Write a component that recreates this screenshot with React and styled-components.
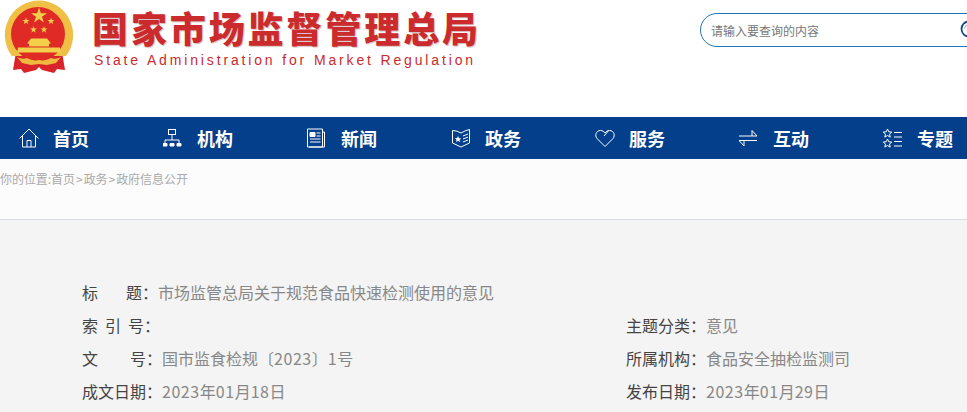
import React from 'react'
import styled, { createGlobalStyle } from 'styled-components'

const cjk = '"Noto Sans CJK SC", "Liberation Sans", sans-serif'

const Global = createGlobalStyle`
  html, body { margin: 0; padding: 0; background: #f4f4f4; }
  body { font-family: ${cjk}; overflow: hidden; }
`

const Page = styled.div`
  width: 967px;
  height: 412px;
  overflow: hidden;
`

const Header = styled.header`
  height: 117px;
  background: #fff;
  display: flex;
  align-items: flex-start;
`

const Brand = styled.div`
  display: flex;
  width: 700px;
  flex: none;
`

const Emblem = styled.svg`
  width: 78px;
  height: 76px;
  flex: none;
  margin-right: 15px;
`

const BrandText = styled.div`
  display: flex;
  flex-direction: column;
`

const BrandName = styled.div`
  margin-top: 6px;
  margin-left: -1px;
  height: 42px;
  font-size: 36px;
  line-height: 42px;
  font-weight: 900;
  letter-spacing: 2.9px;
  color: #cc2b2e;
  white-space: nowrap;
  text-shadow: 1px 1px 1px rgba(120, 60, 60, 0.35);
`

const BrandEn = styled.div`
  margin-top: 3px;
  margin-left: 1px;
  font-family: "Liberation Sans", sans-serif;
  font-size: 14px;
  line-height: 18px;
  letter-spacing: 2.85px;
  color: #cc2b2e;
  white-space: nowrap;
`

const Search = styled.div`
  margin-top: 13px;
  width: 300px;
  height: 34px;
  box-sizing: border-box;
  flex: none;
  border: 1px solid #1f74bd;
  border-radius: 17px;
  display: flex;
  align-items: center;
  padding-left: 10px;
  background: #fff;
`

const SearchHint = styled.span`
  width: 249px;
  flex: none;
  font-size: 12px;
  color: #777;
`

const SearchIcon = styled.svg`
  width: 20px;
  height: 20px;
  flex: none;
`

const Nav = styled.nav`
  height: 42px;
  background: #033f8b;
  display: flex;
  align-items: center;
  padding-left: 19px;
`

const NavItem = styled.a`
  width: 144px;
  flex: none;
  display: flex;
  align-items: center;
  gap: 14px;
  color: #fff;
`

const NavIcon = styled.svg`
  width: 20px;
  height: 20px;
  flex: none;
  fill: none;
  stroke: #fff;
  stroke-width: 1;
`

const NavLabel = styled.span`
  font-size: 18px;
  line-height: 42px;
  font-weight: 700;
  white-space: nowrap;
`

const Crumb = styled.div`
  height: 61px;
  box-sizing: border-box;
  background: #fcfcfc;
  border-bottom: 1px solid #d9dee5;
  font-size: 12px;
  line-height: 40px;
  color: #aaa;
  white-space: nowrap;
  letter-spacing: -0.05px;
`

const CrumbSep = styled.span`
  margin: 0 1px;
`

const Meta = styled.section`
  padding: 56px 0 0 82px;
  display: grid;
  grid-template-columns: 544px 1fr;
  grid-auto-rows: 33px;
  font-size: 16px;
  line-height: 33px;
  background: #f4f4f4;
`

const MetaCell = styled.div`
  display: flex;
  grid-column: ${p => (p.$wide ? '1 / -1' : 'auto')};
  white-space: nowrap;
`

const Label = styled.span`
  width: ${p => p.$width}px;
  flex: none;
  display: flex;
  justify-content: space-between;
  color: #444;
`

const Colon = styled.span`
  width: 16px;
  flex: none;
  color: #444;
`

const Value = styled.span`
  color: #888;
`

const Num = styled.span`
  letter-spacing: 0.55px;
`

const navItems = [
  { label: '首页', icon: <><path d="M.5 10.500 10 1l9.500 9.500" /><path d="M3.500 8V19h13V8" /><path d="M8 19v-6.500h4V19" /></> },
  { label: '机构', icon: <><rect x="5.500" y="1.500" width="7" height="5" /><path d="M9 6.500V12M2 15v-3h14v3" /><path d="M0 15.500h4V18H0zM7 15.500h4V18H7zM14 15.500h4V18h-4z" fill="#fff" /></> },
  { label: '新闻', icon: <><path d="M.5 1h15v18H.5z" /><path d="M16 4h1.500v15H2" /><path d="M3 4.500h5v4H3z" fill="#fff" /><path d="M9.500 5h4M9.500 8h4M3 11h10.500M3 14h10.500" /></> },
  { label: '政务', icon: <><path d="M1.500 2.500 Q6 2.500 10 5 Q14 2.500 18.500 1.500 V15 L10 19 1.500 15z" /><path d="M12 8l5-2M12 11l5-2M12 14l5-2" /><path d="M7 8l1 2.200 2.300.2-1.800 1.500.6 2.300L7 12.800 5 14l.6-2.300-1.800-1.500 2.300-.2z" fill="#fff" stroke="none" /></> },
  { label: '服务', icon: <path d="M10 18.500 2 10.500C-.5 7.500 1 2.500 5.500 2.500 7.500 2.500 9 3.500 10 5 11 3.500 12.500 2.500 14.500 2.500 19 2.500 20.500 7.500 18 10.500zM13.500 2.800 9 8" /> },
  { label: '互动', icon: <><path d="M0 8h18L13 2.500V8" /><path d="M18 12.500H0L5 18v-5.500" /></> },
  { label: '专题', icon: <><path d="M4.500 1l1.300 2.800 3 .3-2.300 2 .7 3-2.700-1.600L1.800 9.100l.7-3-2.300-2 3-.3zM4.500 11l1.300 2.800 3 .3-2.300 2 .7 3-2.700-1.600-2.700 1.600.7-3-2.300-2 3-.3z" /><path d="M11 4.500h8M11 9h8M11 13.500h8M11 18h8" /></> },
]

const App = () => (
  <Page>
    <Global />
    <Header>
      <Brand>
        <Emblem viewBox="0 0 78 76" aria-hidden="true">
          <path d="M16 52 13 70l8-1 3 4 12-3 3-3 3 3 12 3 3-4 8 1-3-18z" fill="#d9242a" />
          <path d="M39 .5A34.500 34.500 0 0 0 12 56h54A34.500 34.500 0 0 0 39 .5z" fill="#f0bf45" />
          <circle cx="38" cy="34" r="27" fill="#df2a26" />
          <path d="M39 7.500l1.900 5.700h6l-4.900 3.500 1.900 5.800-4.900-3.600-4.900 3.600 1.900-5.800-4.900-3.500h6z" fill="#f3cf4a" />
          <path id="s" d="M26 17.500l.9 2.500h2.700l-2.200 1.600.8 2.600-2.200-1.600-2.200 1.600.8-2.600-2.200-1.600h2.700z" fill="#f3cf4a" />
          <use href="#s" x="25" />
          <use href="#s" x="7.500" y="8.500" />
          <use href="#s" x="18" y="8.500" />
          <path d="M31 38.500h16l4 5H27zM29 43.500h20v3h-20zM18 47.500h42l1 5H17z" fill="#f3cf4a" />
          <path d="M17 57c4 2 7 2 10 1 4 2 8 3 12 2 4 1 8 0 12-2 3 1 6 1 10-1l-5 6-9 2-8-1-8 1-9-2z" fill="#eeb93e" />
        </Emblem>
        <BrandText>
          <BrandName>国家市场监督管理总局</BrandName>
          <BrandEn>State Administration for Market Regulation</BrandEn>
        </BrandText>
      </Brand>
      <Search>
        <SearchHint>请输入要查询的内容</SearchHint>
        <SearchIcon viewBox="0 0 20 20" aria-hidden="true">
          <circle cx="9" cy="9" r="7.500" fill="none" stroke="#0f4c8f" strokeWidth="1.800" />
          <path d="M4.500 8.500A4.500 4.500 0 0 1 8.500 4.500" fill="none" stroke="#8aa9cb" strokeWidth="1" />
        </SearchIcon>
      </Search>
    </Header>
    <Nav>
      {navItems.map(item => (
        <NavItem key={item.label}>
          <NavIcon viewBox="0 0 20 20" aria-hidden="true">{item.icon}</NavIcon>
          <NavLabel>{item.label}</NavLabel>
        </NavItem>
      ))}
    </Nav>
    <Crumb>你的位置:首页<CrumbSep>&gt;</CrumbSep>政务<CrumbSep>&gt;</CrumbSep>政府信息公开</Crumb>
    <Meta>
      <MetaCell $wide>
        <Label $width={60}><span>标</span><span>题</span></Label>
        <Colon>：</Colon>
        <Value>市场监管总局关于规范食品快速检测使用的意见</Value>
      </MetaCell>
      <MetaCell>
        <Label $width={62}><span>索</span><span>引</span><span>号</span></Label>
        <Colon>：</Colon>
      </MetaCell>
      <MetaCell>
        <Label $width={64}><span>主</span><span>题</span><span>分</span><span>类</span></Label>
        <Colon>：</Colon>
        <Value>意见</Value>
      </MetaCell>
      <MetaCell>
        <Label $width={64}><span>文</span><span>号</span></Label>
        <Colon>：</Colon>
        <Value>国市监食检规〔<Num>2023</Num>〕<Num>1</Num>号</Value>
      </MetaCell>
      <MetaCell>
        <Label $width={64}><span>所</span><span>属</span><span>机</span><span>构</span></Label>
        <Colon>：</Colon>
        <Value>食品安全抽检监测司</Value>
      </MetaCell>
      <MetaCell>
        <Label $width={64}><span>成</span><span>文</span><span>日</span><span>期</span></Label>
        <Colon>：</Colon>
        <Value><Num>2023</Num>年<Num>01</Num>月<Num>18</Num>日</Value>
      </MetaCell>
      <MetaCell>
        <Label $width={64}><span>发</span><span>布</span><span>日</span><span>期</span></Label>
        <Colon>：</Colon>
        <Value><Num>2023</Num>年<Num>01</Num>月<Num>29</Num>日</Value>
      </MetaCell>
    </Meta>
  </Page>
)

export default App
